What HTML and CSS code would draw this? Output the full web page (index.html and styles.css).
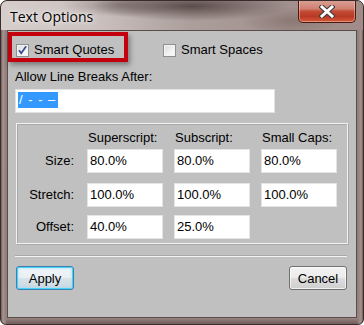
FILE: index.html
```html
<!DOCTYPE html>
<html>
<head>
<meta charset="utf-8">
<link rel="stylesheet" href="styles.css">
</head>
<body>
<div class="window">
  <div class="titlebar">
    <span class="title">Text Options</span>
    <div class="close">
      <svg width="16" height="13" viewBox="0 0 16 13">
        <path d="M3 2 L13 11 M13 2 L3 11" stroke="#3a3a3a" stroke-width="5" stroke-linecap="square" fill="none"/>
        <path d="M3 2 L13 11 M13 2 L3 11" stroke="#ffffff" stroke-width="3" stroke-linecap="square" fill="none"/>
      </svg>
    </div>
  </div>
  <div class="client">
    <div class="checks">
      <div class="highlight">
        <label class="check"><span class="box"><svg width="12" height="12" viewBox="0 0 12 12"><path d="M2.2 6.2 L4.6 9.6 L10 2" stroke="#3b4c92" stroke-width="1.9" fill="none"/></svg></span>Smart Quotes</label>
      </div>
      <label class="check spaces"><span class="box"></span>Smart Spaces</label>
    </div>
    <div class="lbl">Allow Line Breaks After:</div>
    <div class="textbox"><span class="sel">/ - - –</span></div>
    <div class="group">
      <div class="grid">
        <div></div>
        <div class="head">Superscript:</div>
        <div class="head">Subscript:</div>
        <div class="head">Small Caps:</div>

        <div class="rlabel">Size:</div>
        <div class="field">80.0%</div>
        <div class="field">80.0%</div>
        <div class="field">80.0%</div>

        <div class="rlabel">Stretch:</div>
        <div class="field">100.0%</div>
        <div class="field">100.0%</div>
        <div class="field">100.0%</div>

        <div class="rlabel">Offset:</div>
        <div class="field">40.0%</div>
        <div class="field">25.0%</div>
        <div></div>
      </div>
    </div>
    <div class="sep"></div>
    <div class="buttons">
      <div class="btn default">Apply</div>
      <div class="btn">Cancel</div>
    </div>
  </div>
</div>
</body>
</html>
```
FILE: styles.css
```css
html, body {
  margin: 0;
  background: #ffffff;
}

.window {
  width: 364px;
  height: 325px;
  box-sizing: border-box;
  border: 1px solid #3a2c2a;
  border-radius: 7px 7px 6px 6px;
  background:
    linear-gradient(to right, #6f5e5b 0, #a8938f 2px, #8f7d79 5px, transparent 6px, transparent 356px, #8f7d79 357px, #a8938f 360px, #6f5e5b 362px),
    linear-gradient(to bottom, #9a8884 0, #8e7c78 280px, #a08c88 316px, #75615d 322px);
  display: flex;
  flex-direction: column;
  padding: 0 6px 6px;
  font-family: "Liberation Sans", Arial, sans-serif;
  font-size: 13px;
  color: #000;
  overflow: hidden;
}

.titlebar {
  height: 29px;
  margin: 0 -6px;
  padding: 0 7px 0 9px;
  display: flex;
  justify-content: space-between;
  align-items: flex-start;
  background:
    radial-gradient(ellipse 100px 15px at 190px 5px, rgba(70, 55, 52, 0.8), rgba(70, 55, 52, 0) 100%),
    radial-gradient(ellipse 60px 12px at 120px 4px, rgba(90, 75, 72, 0.45), rgba(90, 75, 72, 0) 100%),
    radial-gradient(ellipse 50px 14px at 290px 20px, rgba(110, 90, 86, 0.45), rgba(110, 90, 86, 0) 100%),
    linear-gradient(to right, #d6cecc 0, #cbc1bf 95px, #ab9e9b 190px, #a39390 270px, #a08b87 364px);
  border-radius: 6px 6px 0 0;
}

.title {
  font-family: "Open Sans", "Noto Sans", sans-serif;
  font-size: 14px;
  line-height: 20px;
  margin-top: 6px;
  color: #000;
  text-shadow: 0 0 8px rgba(255, 255, 255, 0.95), 0 0 3px rgba(255, 255, 255, 0.8);
}

.close {
  width: 58px;
  height: 23px;
  margin-top: -1px;
  box-sizing: border-box;
  border: 1px solid #4a1a12;
  border-top: none;
  border-radius: 0 0 5px 5px;
  background: linear-gradient(to bottom, #d9a398 0, #d08070 40%, #c24a34 52%, #b83a24 75%, #d65a3c 100%);
  box-shadow: inset 0 0 0 1px rgba(255, 210, 200, 0.45);
  display: flex;
  align-items: center;
  justify-content: center;
}

.client {
  flex: 1;
  background: #c0c0c0;
  border: 1px solid #5b4c49;
  padding: 1px 8px 0 7px;
  display: flex;
  flex-direction: column;
}

.checks {
  display: flex;
  align-items: flex-start;
  margin-left: -7px;
}

.highlight {
  width: 120px;
  height: 30px;
  box-sizing: border-box;
  border: 4px solid #c4000c;
  padding: 7px 0 0 4px;
  box-shadow: 2px 3px 5px rgba(40, 40, 40, 0.45);
}

.check {
  display: flex;
  align-items: center;
  height: 14px;
  line-height: 14px;
  gap: 5px;
  white-space: nowrap;
}

.spaces {
  margin-left: 35px;
  margin-top: 11px;
}

.box {
  width: 13px;
  height: 13px;
  box-sizing: border-box;
  border: 1px solid #8e8f8f;
  background: linear-gradient(135deg, #dcdcdc 0, #f2f2f2 60%, #ffffff 100%);
  box-shadow: inset 0 0 0 1px #f4f4f4;
  display: flex;
  align-items: center;
  justify-content: center;
}

.lbl {
  margin-top: 7px;
  line-height: 15px;
}

.textbox {
  margin-top: 5px;
  width: 260px;
  height: 24px;
  box-sizing: border-box;
  background: #fff;
  border: 1px solid #e2e2e2;
  padding: 2px 0 0 2px;
}

.sel {
  display: inline-block;
  background: #3399ff;
  color: #fff;
  line-height: 16px;
  padding: 0 2px 0 1px;
  letter-spacing: 1px;
}

.group {
  margin: 10px 0 0 1px;
  width: 332px;
  height: 121px;
  box-sizing: border-box;
  border: 1px solid #f2f2f2;
  box-shadow: inset 1px 1px 0 #a9a9a9, 1px 1px 0 #a9a9a9;
  padding: 6px 0 0 0;
}

.grid {
  display: grid;
  grid-template-columns: 59px 76px 76px 76px;
  grid-template-rows: 19px 34px 32px 24px;
  column-gap: 11px;
  align-items: start;
}

.head {
  padding-left: 1px;
  line-height: 15px;
}

.rlabel {
  text-align: right;
  padding-right: 2px;
  line-height: 24px;
}

.field {
  height: 24px;
  box-sizing: border-box;
  background: #fff;
  border: 1px solid #e4e4e4;
  padding: 0 0 0 2px;
  line-height: 22px;
}

.sep {
  margin-top: 11px;
  height: 1px;
  width: 332px;
  background: #f4f4f4;
  border-top: 1px solid #a9a9a9;
}

.buttons {
  margin: 9px 0 0 1px;
  width: 331px;
  display: flex;
  justify-content: space-between;
}

.btn {
  width: 58px;
  height: 24px;
  box-sizing: border-box;
  border: 1px solid #707070;
  border-radius: 3px;
  background: linear-gradient(to bottom, #f2f2f2 0, #ebebeb 50%, #dddddd 51%, #cfcfcf 100%);
  box-shadow: inset 0 0 0 1px rgba(255, 255, 255, 0.7);
  display: flex;
  align-items: center;
  justify-content: center;
  font-size: 13px;
  line-height: 15px;
  padding-top: 1px;
}

.btn.default {
  border-color: #3c7fb1;
  box-shadow: inset 0 0 0 1px #48d4f8, inset 0 0 2px 2px rgba(160, 220, 250, 0.5);
  background: linear-gradient(to bottom, #f0f6f9 0, #e8f0f4 50%, #d8e4ea 51%, #cbd8df 100%);
}
```
